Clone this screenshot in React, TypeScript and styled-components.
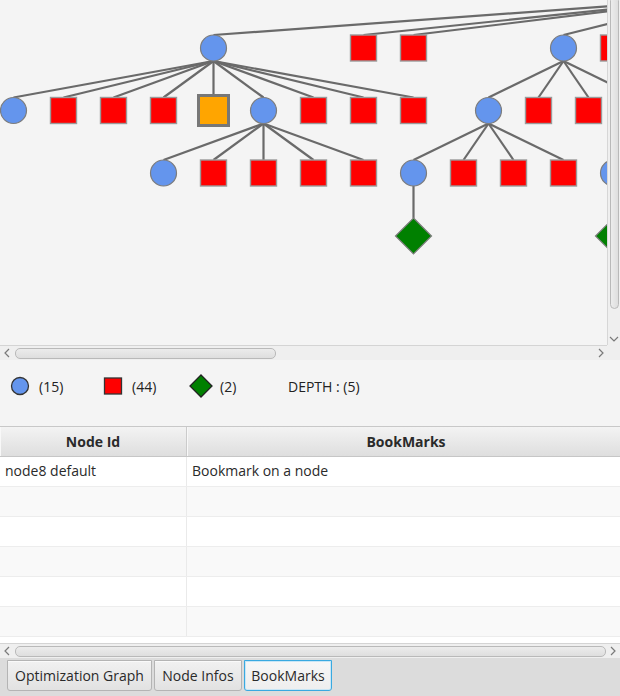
import React from 'react';
import styled, { createGlobalStyle } from 'styled-components';

const Global = createGlobalStyle`
  html, body { margin: 0; padding: 0; }
  body { font-family: "Open Sans", "Noto Sans", sans-serif; background: #f4f4f4; color: #333; }
`;

const Root = styled.div`
  width: 620px;
  height: 696px;
  display: flex;
  flex-direction: column;
  overflow: hidden;
  background: #f4f4f4;
`;

const GraphPane = styled.div`
  display: grid;
  grid-template-columns: 607px 13px;
  grid-template-rows: 345px 15px;
  height: 360px;
  flex: none;
`;

const Canvas = styled.div`
  overflow: hidden;
  background: #f4f4f4;
`;

const VTrack = styled.div`
  position: relative;
  border-left: 1px solid #d6d6d6;
  background: #efefef;
  display: flex;
  flex-direction: column;
  align-items: center;
`;

const VThumb = styled.div`
  width: 9px;
  height: 313px;
  margin-top: -4px;
  border: 1px solid #b9b9b9;
  border-radius: 5px;
  background: linear-gradient(to right, #ececec, #dedede);
  box-sizing: border-box;
`;

const ArrowBox = styled.div<{ $w?: number }>`
  display: flex;
  align-items: center;
  justify-content: center;
  width: ${p => p.$w ?? 13}px;
  height: 13px;
  flex: none;
`;

const HTrack = styled.div`
  display: flex;
  align-items: center;
  border-top: 1px solid #d4d4d4;
  background: #efefef;
  box-sizing: border-box;
  height: 15px;
  flex: none;
`;

const HThumb = styled.div<{ $w: number }>`
  width: ${p => p.$w}px;
  height: 11px;
  margin-top: 1px;
  margin-left: 2px;
  border: 1px solid #b9b9b9;
  border-radius: 5px;
  background: linear-gradient(to bottom, #ececec, #dedede);
  box-sizing: border-box;
  flex: none;
`;

const Spacer = styled.div`
  flex: 1;
`;

const Corner = styled.div`
  background: #efefef;
`;

const Legend = styled.div`
  height: 66px;
  flex: none;
  display: flex;
  align-items: flex-start;
  padding-top: 14px;
  box-sizing: border-box;
  font-size: 14px;
  color: #222;
`;

const LegendRow = styled.div`
  display: flex;
  align-items: center;
  padding-left: 8px;
`;

const LegendItem = styled.div<{ $w: number }>`
  display: flex;
  align-items: center;
  gap: 7px;
  width: ${p => p.$w}px;
  height: 24px;
  flex: none;
`;

const Table = styled.div`
  flex: 1;
  display: flex;
  flex-direction: column;
  border-top: 1px solid #c8c8c8;
  background: #fff;
  overflow: hidden;
  min-height: 0;
`;

const HeaderRow = styled.div`
  display: grid;
  grid-template-columns: 187px 439px;
  height: 30px;
  flex: none;
  background: linear-gradient(to bottom, #f3f3f3, #dedede);
  border-bottom: 1px solid #c6c6c6;
  box-sizing: border-box;
`;

const HeaderCell = styled.div`
  display: flex;
  align-items: center;
  justify-content: center;
  font-weight: 700;
  font-size: 14px;
  color: #2a2a2a;
  border-right: 1px solid #cbcbcb;
  box-shadow: inset 1px 0 0 #f8f8f8;
`;

const Body = styled.div`
  flex: 1;
  overflow: hidden;
  min-height: 0;
`;

const Row = styled.div<{ $odd: boolean }>`
  display: grid;
  grid-template-columns: 187px 439px;
  height: 30px;
  background: ${p => (p.$odd ? '#f9f9f9' : '#ffffff')};
  border-bottom: 1px solid #ededed;
  box-sizing: border-box;
`;

const Cell = styled.div`
  display: flex;
  align-items: center;
  padding-left: 5px;
  padding-bottom: 2px;
  font-size: 14px;
  color: #2a2a2a;
  border-right: 1px solid #eaeaea;
  white-space: nowrap;
`;

const TabBar = styled.div`
  height: 38px;
  flex: none;
  background: #dcdcdc;
  display: flex;
  align-items: flex-start;
  padding: 2px 0 0 7px;
  gap: 2px;
  box-sizing: border-box;
`;

const Tab = styled.div<{ $active?: boolean; $w: number }>`
  width: ${p => p.$w}px;
  height: 31px;
  box-sizing: border-box;
  display: flex;
  align-items: center;
  justify-content: center;
  font-size: 14px;
  color: #2a2a2a;
  border: 1px solid ${p => (p.$active ? '#39a9e0' : '#b4b4b4')};
  border-radius: 0 0 3px 3px;
  background: ${p => (p.$active ? 'linear-gradient(to bottom, #f7f7f7, #eeeeee)' : 'linear-gradient(to bottom, #f1f1f1, #e2e2e2)')};
  box-shadow: ${p => (p.$active ? 'inset 0 0 0 1px #c8e6f6' : 'inset 0 1px 0 #fafafa')};
`;

const Chevron = ({ dir }: { dir: 'l' | 'r' | 'd' }) => {
  const d = dir === 'l' ? 'M6 1 L2 5 L6 9' : dir === 'r' ? 'M2 1 L6 5 L2 9' : 'M1 3 L5 7 L9 3';
  return (
    <svg width={dir === 'd' ? 10 : 8} height={10} viewBox={dir === 'd' ? '0 0 10 10' : '0 0 8 10'}>
      <path d={d} fill="none" stroke="#7a7a7a" strokeWidth={1.2} />
    </svg>
  );
};

type Kind = 'c' | 's' | 'o' | 'd';
type GNode = { id: string; x: number; y: number; k: Kind; p?: string };

const X = (k: number) => 13.5 + 50 * k;
const R1 = 48, R2 = 110.5, R3 = 173, R4 = 236;

const nodes: GNode[] = [
  { id: 'R', x: 709, y: -14, k: 'c' },
  { id: 'A', x: X(4), y: R1, k: 'c', p: 'R' },
  { id: 'B', x: X(7), y: R1, k: 's', p: 'R' },
  { id: 'C', x: X(8), y: R1, k: 's', p: 'R' },
  { id: 'D', x: X(11), y: R1, k: 'c', p: 'R' },
  { id: 'E', x: X(12), y: R1, k: 's', p: 'R' },
  { id: 'a0', x: X(0), y: R2, k: 'c', p: 'A' },
  { id: 'a1', x: X(1), y: R2, k: 's', p: 'A' },
  { id: 'a2', x: X(2), y: R2, k: 's', p: 'A' },
  { id: 'a3', x: X(3), y: R2, k: 's', p: 'A' },
  { id: 'a4', x: X(4), y: R2, k: 'o', p: 'A' },
  { id: 'F', x: X(5), y: R2, k: 'c', p: 'A' },
  { id: 'a6', x: X(6), y: R2, k: 's', p: 'A' },
  { id: 'a7', x: X(7), y: R2, k: 's', p: 'A' },
  { id: 'a8', x: X(8), y: R2, k: 's', p: 'A' },
  { id: 'G', x: X(9.5), y: R2, k: 'c', p: 'D' },
  { id: 'd1', x: X(10.5), y: R2, k: 's', p: 'D' },
  { id: 'd2', x: X(11.5), y: R2, k: 's', p: 'D' },
  { id: 'd3', x: X(12.5), y: R2, k: 's', p: 'D' },
  { id: 'f0', x: X(3), y: R3, k: 'c', p: 'F' },
  { id: 'f1', x: X(4), y: R3, k: 's', p: 'F' },
  { id: 'f2', x: X(5), y: R3, k: 's', p: 'F' },
  { id: 'f3', x: X(6), y: R3, k: 's', p: 'F' },
  { id: 'f4', x: X(7), y: R3, k: 's', p: 'F' },
  { id: 'H', x: X(8), y: R3, k: 'c', p: 'G' },
  { id: 'g1', x: X(9), y: R3, k: 's', p: 'G' },
  { id: 'g2', x: X(10), y: R3, k: 's', p: 'G' },
  { id: 'g3', x: X(11), y: R3, k: 's', p: 'G' },
  { id: 'I', x: X(12), y: R3, k: 'c' },
  { id: 'h0', x: X(8), y: R4, k: 'd', p: 'H' },
  { id: 'i0', x: X(12), y: R4, k: 'd', p: 'I' },
];

const half = (k: Kind) => (k === 'd' ? 18 : k === 'o' ? 15 : 13);

const GraphNode = ({ n }: { n: GNode }) => {
  if (n.k === 'c')
    return <circle cx={n.x} cy={n.y} r={13} fill="#6495ed" stroke="#7d7d7d" strokeWidth={1.2} />;
  if (n.k === 's')
    return <rect x={n.x - 13} y={n.y - 13} width={26} height={26} fill="#ff0000" stroke="#9a9a9a" strokeWidth={1.4} />;
  if (n.k === 'o')
    return <rect x={n.x - 15} y={n.y - 15} width={30} height={30} fill="#ffa500" stroke="#777" strokeWidth={3} />;
  return (
    <polygon
      points={`${n.x},${n.y - 18} ${n.x + 18},${n.y} ${n.x},${n.y + 18} ${n.x - 18},${n.y}`}
      fill="#008000"
      stroke="#7d7d7d"
      strokeWidth={1.2}
    />
  );
};

const Graph = () => {
  const byId: Record<string, GNode> = {};
  nodes.forEach(n => (byId[n.id] = n));
  return (
    <svg width={607} height={345} viewBox="0 0 607 345">
      {nodes
        .filter(n => n.p)
        .map(n => {
          const p = byId[n.p as string];
          return (
            <line
              key={'e' + n.id}
              x1={p.x}
              y1={p.y + half(p.k)}
              x2={n.x}
              y2={n.y - half(n.k)}
              stroke="#6a6a6a"
              strokeWidth={2.2}
            />
          );
        })}
      {nodes.map(n => (
        <GraphNode key={n.id} n={n} />
      ))}
    </svg>
  );
};

const LegendShape = ({ k }: { k: 'c' | 's' | 'd' }) => (
  <svg width={24} height={24} viewBox="0 0 24 24">
    {k === 'c' && <circle cx={12} cy={12} r={8.5} fill="#6495ed" stroke="#333" strokeWidth={1.3} />}
    {k === 's' && <rect x={3.5} y={4} width={17} height={16} fill="#ff0000" stroke="#333" strokeWidth={1.3} />}
    {k === 'd' && <polygon points="12,1 23,12 12,23 1,12" fill="#008000" stroke="#222" strokeWidth={1.3} />}
  </svg>
);

const rows = [
  ['node8 default', 'Bookmark on a node'],
  ['', ''],
  ['', ''],
  ['', ''],
  ['', ''],
  ['', ''],
];

export default function App() {
  return (
    <Root>
      <Global />
      <GraphPane>
        <Canvas>
          <Graph />
        </Canvas>
        <VTrack>
          <VThumb />
          <Spacer />
          <ArrowBox $w={12}>
            <Chevron dir="d" />
          </ArrowBox>
        </VTrack>
        <HTrack>
          <ArrowBox $w={13}>
            <Chevron dir="l" />
          </ArrowBox>
          <HThumb $w={261} />
          <Spacer />
          <ArrowBox $w={13}>
            <Chevron dir="r" />
          </ArrowBox>
        </HTrack>
        <Corner />
      </GraphPane>
      <Legend>
        <LegendRow>
          <LegendItem $w={93}>
            <LegendShape k="c" />
            <span>(15)</span>
          </LegendItem>
          <LegendItem $w={88}>
            <LegendShape k="s" />
            <span>(44)</span>
          </LegendItem>
          <LegendItem $w={99}>
            <LegendShape k="d" />
            <span>(2)</span>
          </LegendItem>
          <LegendItem $w={120}>
            <span>DEPTH : (5)</span>
          </LegendItem>
        </LegendRow>
      </Legend>
      <Table>
        <HeaderRow>
          <HeaderCell>Node Id</HeaderCell>
          <HeaderCell>BookMarks</HeaderCell>
        </HeaderRow>
        <Body>
          {rows.map((r, i) => (
            <Row key={i} $odd={i % 2 === 1}>
              <Cell>{r[0]}</Cell>
              <Cell>{r[1]}</Cell>
            </Row>
          ))}
        </Body>
        <HTrack>
          <ArrowBox $w={13}>
            <Chevron dir="l" />
          </ArrowBox>
          <HThumb $w={591} />
          <Spacer />
          <ArrowBox $w={14}>
            <Chevron dir="r" />
          </ArrowBox>
        </HTrack>
      </Table>
      <TabBar>
        <Tab $w={145}>Optimization Graph</Tab>
        <Tab $w={88}>Node Infos</Tab>
        <Tab $w={88} $active>
          BookMarks
        </Tab>
      </TabBar>
    </Root>
  );
}
